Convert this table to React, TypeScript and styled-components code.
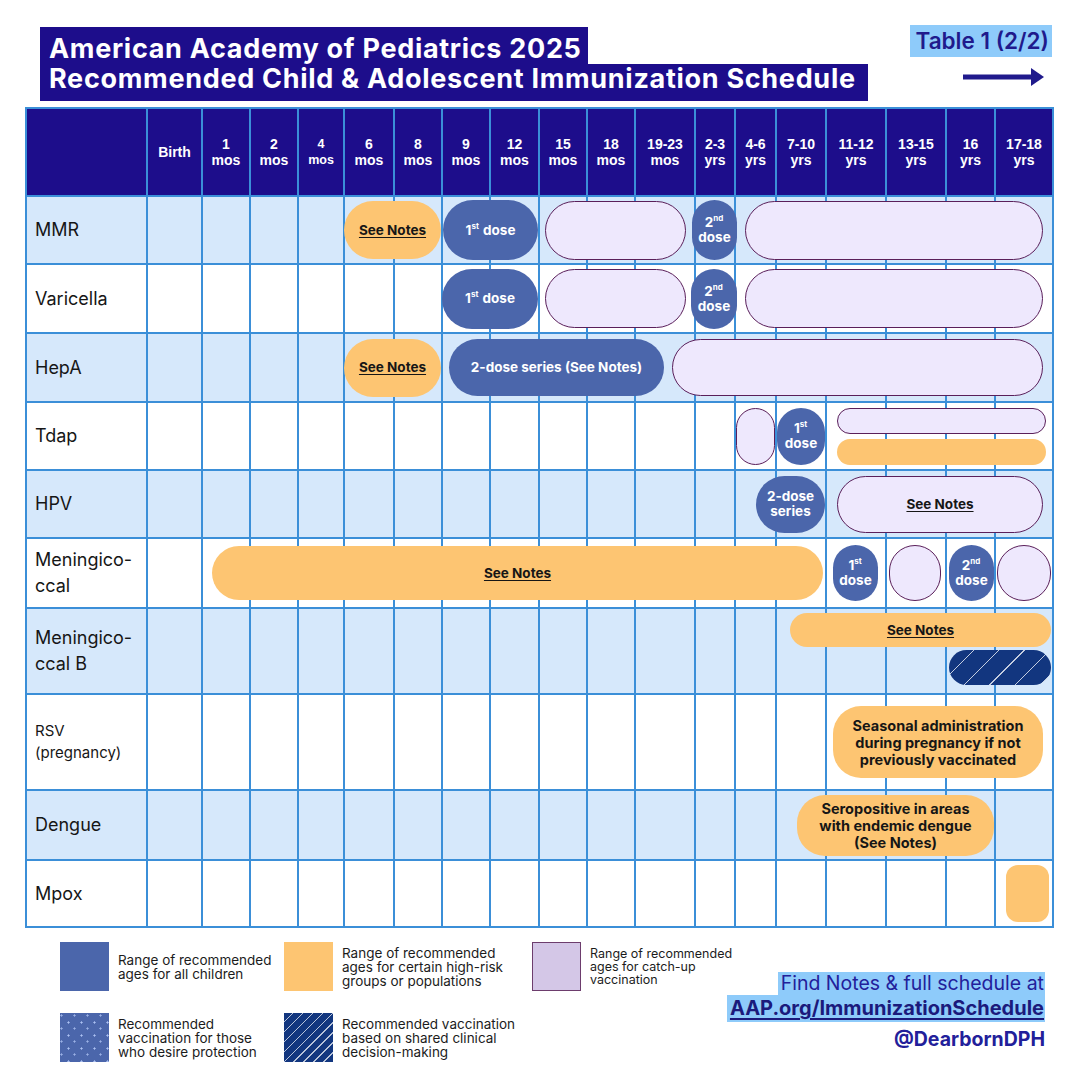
import React from 'react'
import styled, { createGlobalStyle, css } from 'styled-components'

const INDIGO = '#1d0d8b'
const GRID = '#3b8fd8'
const SHADE = '#d6e8fb'
const BLUE = '#4b66ab'
const ORANGE = '#fdc572'
const LAV = '#eee8fd'
const LAV_EDGE = '#5a1f5a'
const NAVY = '#12367f'
const SKY = '#8ecbfa'

// widths of the 19 columns inside the table border
const COLS = [119, 55, 48, 48, 46, 50, 48, 48, 49, 48, 48, 60, 40, 41, 50, 60, 60, 49, 58]
const TEMPLATE = COLS.map((w) => `${w}px`).join(' ')

const GlobalStyle = createGlobalStyle`
  body {
    margin: 0;
    background: #fff;
    font-family: Inter, 'Liberation Sans', sans-serif;
  }
`

const Page = styled.div`
  width: 1080px;
  height: 1080px;
  box-sizing: border-box;
  padding-top: 25px;
  overflow: hidden;
`

const TopBar = styled.div`
  display: flex;
  justify-content: space-between;
  align-items: flex-start;
  padding: 0 28px 0 40px;
`

const TitleBlock = styled.h1`
  display: flex;
  flex-direction: column;
  align-items: flex-start;
  margin: 2px 0 0;
  font-family: Inter, sans-serif;
  font-weight: 700;
  font-size: 27px;
  color: #fff;
  letter-spacing: 0.7px;
`

const TitleLine = styled.span<{ $first?: boolean }>`
  display: block;
  background: ${INDIGO};
  padding: 0 9px 0 9px;
  line-height: 30px;
  ${(p) =>
    p.$first
      ? css`
          padding-top: 7px;
          padding-right: 6px;
        `
      : css`
          padding-bottom: 7px;
          padding-right: 12px;
        `}
`

const TagColumn = styled.div`
  display: flex;
  flex-direction: column;
  align-items: flex-end;
`

const TableTag = styled.div`
  background: ${SKY};
  color: #201a8c;
  font-family: Inter, sans-serif;
  font-weight: 600;
  font-size: 22.5px;
  line-height: 32px;
  padding: 0 3px 0 5px;
`

const Arrow = styled.svg`
  margin: 10px 7px 0 0;
`

const Table = styled.div`
  margin: 6px 0 0 25px;
  width: 1029px;
  box-sizing: border-box;
  border: 2px solid ${GRID};
`

const Row = styled.div<{ $h: number; $shade?: boolean; $head?: boolean; $first?: boolean }>`
  display: grid;
  grid-template-columns: ${TEMPLATE};
  height: ${(p) => p.$h}px;
  box-sizing: border-box;
  border-top: ${(p) => (p.$first ? 'none' : `2px solid ${GRID}`)};
  background: ${(p) => (p.$head ? INDIGO : p.$shade ? SHADE : '#fff')};
`

const Cell = styled.div<{ $col: number }>`
  grid-row: 1;
  grid-column: ${(p) => p.$col};
  box-sizing: border-box;
  border-left: ${(p) => (p.$col > 1 ? `2px solid ${GRID}` : 'none')};
`

const HeadCell = styled(Cell)<{ $small?: boolean }>`
  display: flex;
  flex-direction: column;
  align-items: center;
  justify-content: center;
  color: #fff;
  font-family: 'Liberation Sans', Arial, sans-serif;
  font-weight: 700;
  font-size: ${(p) => (p.$small ? 12.5 : 14)}px;
  line-height: 16px;
  text-align: center;
`

const LabelCell = styled(Cell)<{ $small?: boolean }>`
  display: flex;
  align-items: center;
  padding-left: 8px;
  color: #161616;
  font-size: ${(p) => (p.$small ? 15 : 18)}px;
  line-height: ${(p) => (p.$small ? 22 : 26)}px;
  white-space: pre-line;
`

type Kind = 'blue' | 'orange' | 'lav' | 'hatch'

const kindStyles = {
  blue: css`
    background: ${BLUE};
    color: #fff;
  `,
  orange: css`
    background: ${ORANGE};
    color: #161616;
  `,
  lav: css`
    background: ${LAV};
    border: 1px solid ${LAV_EDGE};
    color: #161616;
  `,
  hatch: css`
    background-color: ${NAVY};
    background-image: repeating-linear-gradient(
      135deg,
      transparent 0 17px,
      rgba(255, 255, 255, 0.75) 17px 18px
    );
  `,
}

const Pill = styled.div<{
  $kind: Kind
  $from: number
  $to: number
  $h: number
  $ml: number
  $mr: number
  $r?: number
  $align?: 'start' | 'end'
  $my?: number
  $big?: boolean
}>`
  grid-row: 1;
  grid-column: ${(p) => `${p.$from} / ${p.$to}`};
  align-self: ${(p) => p.$align || 'center'};
  margin: ${(p) => (p.$align === 'start' ? p.$my : 0)}px ${(p) => p.$mr}px
    ${(p) => (p.$align === 'end' ? p.$my : 0)}px ${(p) => p.$ml}px;
  height: ${(p) => p.$h}px;
  box-sizing: border-box;
  border-radius: ${(p) => (p.$r !== undefined ? `${p.$r}px` : '999px')};
  display: flex;
  align-items: center;
  justify-content: center;
  text-align: center;
  font-weight: 700;
  font-size: ${(p) => (p.$big ? 14.5 : 13.5)}px;
  line-height: ${(p) => (p.$big ? 17 : 15)}px;
  z-index: 1;
  ${(p) => kindStyles[p.$kind]}
`

const Stack = styled.div<{ $from: number; $to: number; $ml: number; $mr: number }>`
  grid-row: 1;
  grid-column: ${(p) => `${p.$from} / ${p.$to}`};
  align-self: center;
  margin: 0 ${(p) => p.$mr}px 0 ${(p) => p.$ml}px;
  display: flex;
  flex-direction: column;
  gap: 5px;
  z-index: 1;
`

const Bar = styled.div<{ $kind: Kind }>`
  height: 26px;
  box-sizing: border-box;
  border-radius: 13px;
  ${(p) => kindStyles[p.$kind]}
`

const Notes = styled.span`
  text-decoration: underline;
  text-underline-offset: 2px;
`

const Sup = styled.sup`
  font-size: 8px;
  line-height: 0;
  vertical-align: 6px;
  margin-right: 1px;
`

const Footer = styled.div`
  display: flex;
  justify-content: space-between;
  align-items: flex-start;
  margin-top: 14px;
  padding: 0 35px 0 60px;
`

const Legend = styled.div`
  display: grid;
  grid-template-columns: 224px 248px 150px;
  row-gap: 22px;
`

const LegendItem = styled.div`
  display: flex;
  align-items: center;
  gap: 9px;
`

const swatchStyles = {
  blue: css`
    background: ${BLUE};
  `,
  orange: css`
    background: ${ORANGE};
  `,
  lav: css`
    background: #d4c7e7;
    border: 1px solid #6d3d6d;
  `,
  dots: css`
    background-color: ${BLUE};
    background-image: radial-gradient(rgba(190, 210, 255, 0.85) 0.8px, transparent 1.4px),
      radial-gradient(rgba(190, 210, 255, 0.7) 0.8px, transparent 1.4px);
    background-size: 13px 13px, 13px 13px;
    background-position: 2px 3px, 8px 9px;
  `,
  hatch: css`
    background-color: ${NAVY};
    background-image: repeating-linear-gradient(
      135deg,
      transparent 0 6px,
      rgba(255, 255, 255, 0.7) 6px 7px
    );
  `,
}

type Swatch = keyof typeof swatchStyles

const SwatchBox = styled.div<{ $kind: Swatch }>`
  width: 49px;
  height: 49px;
  flex: none;
  box-sizing: border-box;
  ${(p) => swatchStyles[p.$kind]}
`

const LegendText = styled.div<{ $small?: boolean }>`
  font-size: ${(p) => (p.$small ? 12.5 : 13.5)}px;
  line-height: ${(p) => (p.$small ? 13 : 14)}px;
  color: #1c1c1c;
  white-space: pre;
`

const Links = styled.div`
  display: flex;
  flex-direction: column;
  align-items: flex-end;
  margin-top: 30px;
`

const LinkLine = styled.span<{ $bold?: boolean }>`
  background: ${SKY};
  color: #22209a;
  font-size: ${(p) => (p.$bold ? 20 : 19.5)}px;
  font-weight: ${(p) => (p.$bold ? 700 : 400)};
  line-height: ${(p) => (p.$bold ? 27 : 23)}px;
  padding: 0 1px 0 3px;
  ${(p) =>
    p.$bold &&
    css`
      color: #1b1a7c;
      text-decoration: underline;
      text-underline-offset: 3px;
    `}
`

const Handle = styled.span`
  margin-top: 5px;
  color: #22209a;
  font-size: 19.5px;
  font-weight: 700;
  line-height: 25px;
`

const HEADS: { top: string; bottom?: string; small?: boolean }[] = [
  { top: 'Birth' },
  { top: '1', bottom: 'mos' },
  { top: '2', bottom: 'mos' },
  { top: '4', bottom: 'mos', small: true },
  { top: '6', bottom: 'mos' },
  { top: '8', bottom: 'mos' },
  { top: '9', bottom: 'mos' },
  { top: '12', bottom: 'mos' },
  { top: '15', bottom: 'mos' },
  { top: '18', bottom: 'mos' },
  { top: '19-23', bottom: 'mos' },
  { top: '2-3', bottom: 'yrs' },
  { top: '4-6', bottom: 'yrs' },
  { top: '7-10', bottom: 'yrs' },
  { top: '11-12', bottom: 'yrs' },
  { top: '13-15', bottom: 'yrs' },
  { top: '16', bottom: 'yrs' },
  { top: '17-18', bottom: 'yrs' },
]

type PillDef = {
  kind: Kind
  cols: [number, number]
  h: number
  ml: number
  mr: number
  r?: number
  align?: 'start' | 'end'
  my?: number
  big?: boolean
  text?: React.ReactNode
}

type StackDef = { stack: Kind[]; cols: [number, number]; ml: number; mr: number }

type RowDef = {
  label: string
  h: number
  shade?: boolean
  small?: boolean
  items: (PillDef | StackDef)[]
}

const seeNotes = <Notes>See Notes</Notes>
const firstDose = (
  <span>
    1<Sup>st</Sup> dose
  </span>
)
const firstDoseTall = (
  <span>
    1<Sup>st</Sup>
    <br />
    dose
  </span>
)
const secondDoseTall = (
  <span>
    2<Sup>nd</Sup>
    <br />
    dose
  </span>
)

const ROWS: RowDef[] = [
  {
    label: 'MMR',
    h: 68,
    shade: true,
    items: [
      { kind: 'orange', cols: [6, 8], h: 58, ml: 1, mr: 0, text: seeNotes },
      { kind: 'blue', cols: [8, 10], h: 60, ml: 2, mr: 0, text: firstDose },
      { kind: 'lav', cols: [10, 13], h: 59, ml: 7, mr: 8 },
      { kind: 'blue', cols: [13, 14], h: 60, ml: -2, mr: -3, text: secondDoseTall },
      { kind: 'lav', cols: [14, 20], h: 59, ml: 11, mr: 9 },
    ],
  },
  {
    label: 'Varicella',
    h: 69,
    items: [
      { kind: 'blue', cols: [8, 10], h: 60, ml: 1, mr: 0, text: firstDose },
      { kind: 'lav', cols: [10, 13], h: 59, ml: 7, mr: 8 },
      { kind: 'blue', cols: [13, 14], h: 60, ml: -3, mr: -3, text: secondDoseTall },
      { kind: 'lav', cols: [14, 20], h: 59, ml: 11, mr: 9 },
    ],
  },
  {
    label: 'HepA',
    h: 69,
    shade: true,
    items: [
      { kind: 'orange', cols: [6, 8], h: 58, ml: 1, mr: 0, text: seeNotes },
      { kind: 'blue', cols: [8, 13], h: 57, ml: 8, mr: 30, text: '2-dose series (See Notes)' },
      { kind: 'lav', cols: [12, 20], h: 57, ml: 38, mr: 9 },
    ],
  },
  {
    label: 'Tdap',
    h: 68,
    items: [
      { kind: 'lav', cols: [14, 15], h: 57, ml: 2, mr: 0, r: 20 },
      { kind: 'blue', cols: [15, 16], h: 57, ml: 2, mr: 0, text: firstDoseTall },
      { stack: ['lav', 'orange'], cols: [16, 20], ml: 12, mr: 6 },
    ],
  },
  {
    label: 'HPV',
    h: 68,
    shade: true,
    items: [
      {
        kind: 'blue',
        cols: [14, 16],
        h: 57,
        ml: 22,
        mr: 0,
        text: (
          <span>
            2-dose
            <br />
            series
          </span>
        ),
      },
      { kind: 'lav', cols: [16, 20], h: 57, ml: 12, mr: 9, text: seeNotes },
    ],
  },
  {
    label: 'Meningico-\nccal',
    h: 70,
    items: [
      { kind: 'orange', cols: [3, 16], h: 54, ml: 11, mr: 2, text: seeNotes },
      { kind: 'blue', cols: [16, 17], h: 56, ml: 8, mr: 7, text: firstDoseTall },
      { kind: 'lav', cols: [17, 18], h: 56, ml: 4, mr: 4 },
      { kind: 'blue', cols: [18, 19], h: 56, ml: 4, mr: 0, text: secondDoseTall },
      { kind: 'lav', cols: [19, 20], h: 56, ml: 3, mr: 1 },
    ],
  },
  {
    label: 'Meningico-\nccal B',
    h: 86,
    shade: true,
    items: [
      { kind: 'orange', cols: [15, 20], h: 34, ml: 15, mr: 1, align: 'start', my: 4, text: seeNotes },
      { kind: 'hatch', cols: [18, 20], h: 35, ml: 4, mr: 1, align: 'end', my: 8 },
    ],
  },
  {
    label: 'RSV\n(pregnancy)',
    h: 96,
    small: true,
    items: [
      {
        kind: 'orange',
        cols: [16, 20],
        h: 72,
        ml: 8,
        mr: 9,
        r: 28,
        big: true,
        text: (
          <span>
            Seasonal administration
            <br />
            during pregnancy if not
            <br />
            previously vaccinated
          </span>
        ),
      },
    ],
  },
  {
    label: 'Dengue',
    h: 70,
    shade: true,
    items: [
      {
        kind: 'orange',
        cols: [15, 19],
        h: 61,
        ml: 22,
        mr: 0,
        r: 28,
        big: true,
        text: (
          <span>
            Seropositive in areas
            <br />
            with endemic dengue
            <br />
            (See Notes)
          </span>
        ),
      },
    ],
  },
  {
    label: 'Mpox',
    h: 67,
    items: [{ kind: 'orange', cols: [19, 20], h: 57, ml: 12, mr: 3, r: 12 }],
  },
]

const LEGEND: { kind: Swatch; text: string; small?: boolean }[] = [
  { kind: 'blue', text: 'Range of recommended\nages for all children' },
  { kind: 'orange', text: 'Range of recommended\nages for certain high-risk\ngroups or populations' },
  { kind: 'lav', text: 'Range of recommended\nages for catch-up\nvaccination', small: true },
  { kind: 'dots', text: 'Recommended\nvaccination for those\nwho desire protection' },
  { kind: 'hatch', text: 'Recommended vaccination\nbased on shared clinical\ndecision-making' },
]

const isStack = (d: PillDef | StackDef): d is StackDef => 'stack' in d

const ScheduleRow: React.FC<{ row: RowDef }> = ({ row }) => (
  <Row $h={row.h} $shade={row.shade}>
    <LabelCell $col={1} $small={row.small}>
      {row.label}
    </LabelCell>
    {HEADS.map((_, i) => (
      <Cell key={i} $col={i + 2} />
    ))}
    {row.items.map((item, i) =>
      isStack(item) ? (
        <Stack key={`s${i}`} $from={item.cols[0]} $to={item.cols[1]} $ml={item.ml} $mr={item.mr}>
          {item.stack.map((k, j) => (
            <Bar key={j} $kind={k} />
          ))}
        </Stack>
      ) : (
        <Pill
          key={`p${i}`}
          $kind={item.kind}
          $from={item.cols[0]}
          $to={item.cols[1]}
          $h={item.h}
          $ml={item.ml}
          $mr={item.mr}
          $r={item.r}
          $align={item.align}
          $my={item.my}
          $big={item.big}
        >
          {item.text}
        </Pill>
      )
    )}
  </Row>
)

export default function App() {
  return (
    <Page>
      <GlobalStyle />
      <TopBar>
        <TitleBlock>
          <TitleLine $first>American Academy of Pediatrics 2025</TitleLine>
          <TitleLine>Recommended Child &amp; Adolescent Immunization Schedule</TitleLine>
        </TitleBlock>
        <TagColumn>
          <TableTag>Table 1 (2/2)</TableTag>
          <Arrow width="82" height="20" viewBox="0 0 82 20">
            <rect x="0" y="7.5" width="70" height="5" fill="#201a8c" />
            <path d="M68 1 L81 10 L68 19 Z" fill="#201a8c" strokeLinejoin="round" />
          </Arrow>
        </TagColumn>
      </TopBar>

      <Table>
        <Row $h={86} $head $first>
          <HeadCell $col={1} />
          {HEADS.map((h, i) => (
            <HeadCell key={h.top} $col={i + 2} $small={h.small}>
              <span>{h.top}</span>
              {h.bottom && <span>{h.bottom}</span>}
            </HeadCell>
          ))}
        </Row>
        {ROWS.map((row) => (
          <ScheduleRow key={row.label} row={row} />
        ))}
      </Table>

      <Footer>
        <Legend>
          {LEGEND.map((l) => (
            <LegendItem key={l.text}>
              <SwatchBox $kind={l.kind} />
              <LegendText $small={l.small}>{l.text}</LegendText>
            </LegendItem>
          ))}
        </Legend>
        <Links>
          <LinkLine>Find Notes &amp; full schedule at</LinkLine>
          <LinkLine $bold>AAP.org/ImmunizationSchedule</LinkLine>
          <Handle>@DearbornDPH</Handle>
        </Links>
      </Footer>
    </Page>
  )
}
